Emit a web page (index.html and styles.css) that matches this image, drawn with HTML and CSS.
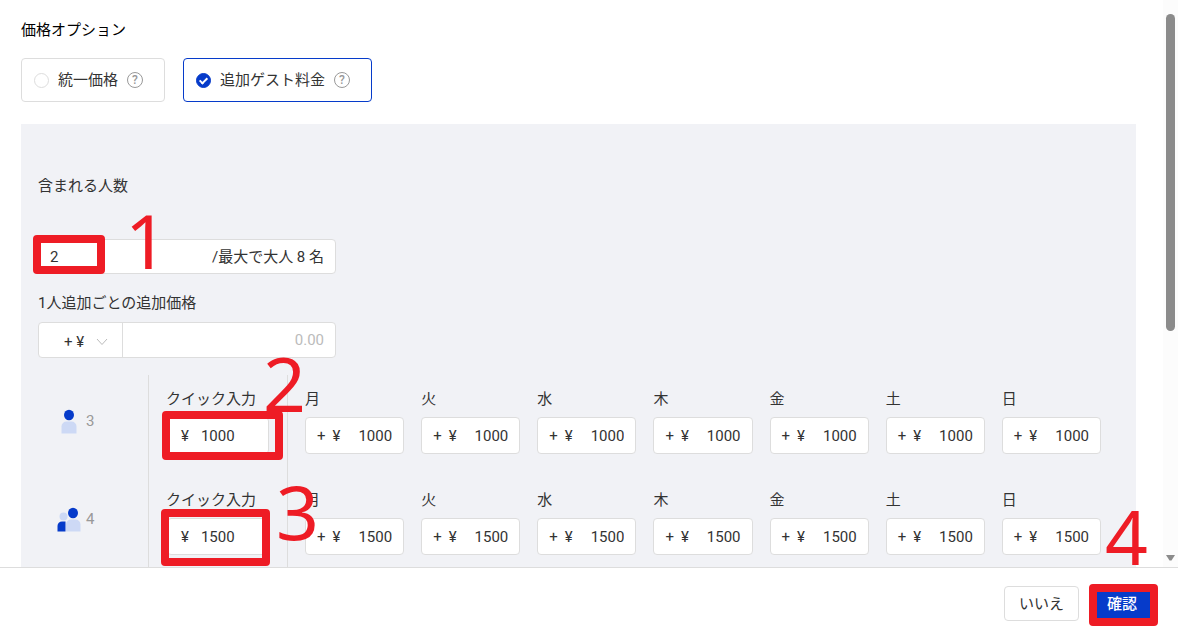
FILE: index.html
```html
<!DOCTYPE html>
<html lang="ja">
<head>
  <meta charset="UTF-8">
  <meta name="viewport" content="width=device-width, initial-scale=1.0">
  <title>価格オプション</title>
  <link rel="stylesheet" href="styles.css">
</head>
<body>
  <form class="dialog" id="priceForm">
    <div class="dialog-body">
      <div class="content">
        <h1>価格オプション</h1>
        <div class="options">
          <label class="option">
            <input type="radio" name="priceType" value="flat">
            <span>統一価格</span>
            <span class="help">?</span>
          </label>
          <label class="option selected">
            <input type="radio" name="priceType" value="extra" checked>
            <span>追加ゲスト料金</span>
            <span class="help">?</span>
          </label>
        </div>

        <div class="panel">
          <label class="field-label" for="included">含まれる人数</label>
          <div class="field included">
            <input type="text" id="included" value="2">
            <span class="suffix">/最大で大人 8 名</span>
            <span class="mark mark-1"></span>
            <span class="number number-1">1</span>
          </div>

          <label class="field-label" for="extraPrice">1人追加ごとの追加価格</label>
          <div class="field extra">
            <div class="select-box">
              <select id="extraType" aria-label="通貨">
                <option>+ ¥</option>
                <option>+ %</option>
              </select>
              <svg class="chevron" width="12" height="8" viewBox="0 0 12 8" fill="none" stroke="#bbb"><path d="M1 1l5 5.500L11 1"/></svg>
            </div>
            <input type="text" id="extraPrice" placeholder="0.00">
          </div>

          <div class="guest-row">
            <div class="guests">
              <svg width="24" height="25" viewBox="0 0 24 25">
                <path d="M4.500 24.500v-7a5 5 0 0 1 5-5h5a5 5 0 0 1 5 5v7z" fill="#cdd9f5"/>
                <ellipse cx="12" cy="6" rx="5" ry="5.300" fill="#063bca"/>
              </svg>
              <span>3</span>
            </div>
            <div class="quick">
              <label for="quick3">クイック入力</label>
              <div class="field">
                <span>¥</span><input type="text" id="quick3" value="1000">
                <span class="mark mark-2"></span>
                <span class="number number-2">2</span>
              </div>
            </div>
            <div class="days">
              <div class="day"><label for="mon3">月</label><div class="field"><span>+</span><span>¥</span><input type="text" id="mon3" value="1000"></div></div>
              <div class="day"><label for="tue3">火</label><div class="field"><span>+</span><span>¥</span><input type="text" id="tue3" value="1000"></div></div>
              <div class="day"><label for="wed3">水</label><div class="field"><span>+</span><span>¥</span><input type="text" id="wed3" value="1000"></div></div>
              <div class="day"><label for="thu3">木</label><div class="field"><span>+</span><span>¥</span><input type="text" id="thu3" value="1000"></div></div>
              <div class="day"><label for="fri3">金</label><div class="field"><span>+</span><span>¥</span><input type="text" id="fri3" value="1000"></div></div>
              <div class="day"><label for="sat3">土</label><div class="field"><span>+</span><span>¥</span><input type="text" id="sat3" value="1000"></div></div>
              <div class="day"><label for="sun3">日</label><div class="field"><span>+</span><span>¥</span><input type="text" id="sun3" value="1000"></div></div>
            </div>
          </div>

          <div class="guest-row">
            <div class="guests">
              <svg width="24" height="25" viewBox="0 0 24 25">
                <circle cx="6.500" cy="9.500" r="4" fill="#cdd9f5"/>
                <path d="M.5 24.500v-5.500a4.500 4.500 0 0 1 4.500-4.500h3.500v10z" fill="#063bca"/>
                <path d="M9 24.500v-7a5 5 0 0 1 5-5h4.500a5 5 0 0 1 5 5v7z" fill="#cdd9f5"/>
                <ellipse cx="16" cy="6" rx="5" ry="5.300" fill="#063bca"/>
              </svg>
              <span>4</span>
            </div>
            <div class="quick">
              <label for="quick4">クイック入力</label>
              <div class="field">
                <span>¥</span><input type="text" id="quick4" value="1500">
                <span class="mark mark-3"></span>
                <span class="number number-3">3</span>
              </div>
            </div>
            <div class="days">
              <div class="day"><label for="mon4">月</label><div class="field"><span>+</span><span>¥</span><input type="text" id="mon4" value="1500"></div></div>
              <div class="day"><label for="tue4">火</label><div class="field"><span>+</span><span>¥</span><input type="text" id="tue4" value="1500"></div></div>
              <div class="day"><label for="wed4">水</label><div class="field"><span>+</span><span>¥</span><input type="text" id="wed4" value="1500"></div></div>
              <div class="day"><label for="thu4">木</label><div class="field"><span>+</span><span>¥</span><input type="text" id="thu4" value="1500"></div></div>
              <div class="day"><label for="fri4">金</label><div class="field"><span>+</span><span>¥</span><input type="text" id="fri4" value="1500"></div></div>
              <div class="day"><label for="sat4">土</label><div class="field"><span>+</span><span>¥</span><input type="text" id="sat4" value="1500"></div></div>
              <div class="day"><label for="sun4">日</label><div class="field"><span>+</span><span>¥</span><input type="text" id="sun4" value="1500"></div></div>
            </div>
          </div>
        </div>
      </div>
      <div class="scrollbar">
        <div class="thumb"></div>
        <svg width="9" height="6" viewBox="0 0 9 6"><path d="M0 0h9L5.500 5.500h-2z" fill="#8b8b8b"/></svg>
      </div>
    </div>

    <div class="footer">
      <button type="button" class="cancel-btn">いいえ</button>
      <div class="confirm">
        <button type="submit" class="confirm-btn">確認</button>
        <span class="mark mark-4"></span>
        <span class="number number-4">4</span>
      </div>
    </div>
  </form>
</body>
</html>
```
FILE: styles.css
```css
* {
  box-sizing: border-box;
}
body {
  margin: 0;
  background: #fff;
  color: #333;
  font-family: Roboto, "Noto Sans CJK JP", sans-serif;
  font-size: 15px;
  line-height: 22px;
}
input, select, button {
  font: inherit;
  color: inherit;
}
.dialog {
  display: flex;
  flex-direction: column;
  height: 100vh;
}
.dialog-body {
  display: flex;
  flex: 1;
  min-height: 0;
}
.content {
  flex: 1;
  min-width: 0;
  overflow: hidden;
  padding: 19px 27px 0 21px;
}
h1 {
  margin: 0 0 17px;
  color: #000;
  font-size: 15px;
  font-weight: 400;
}

/* price type */
.options {
  display: flex;
  gap: 18px;
  margin-bottom: 22px;
}
.option {
  display: flex;
  align-items: center;
  gap: 9px;
  height: 44px;
  padding: 0 21px 0 12px;
  border: 1px solid #ddd;
  border-radius: 4px;
}
.option.selected {
  border-color: #063bca;
}
.option input {
  appearance: none;
  display: flex;
  justify-content: center;
  width: 15px;
  height: 15px;
  margin: 0;
  border: 1px solid #ddd;
  border-radius: 50%;
}
.option input:checked {
  border-color: #063bca;
  background: #063bca;
}
.option input:checked::after {
  content: "";
  width: 3px;
  height: 6px;
  margin-top: 2px;
  border: solid #fff;
  border-width: 0 2px 2px 0;
  transform: rotate(45deg);
}
.help {
  width: 16px;
  height: 16px;
  border: 1px solid #999;
  border-radius: 50%;
  color: #999;
  font-size: 12px;
  font-weight: 500;
  line-height: 14px;
  text-align: center;
}

/* extra guest panel */
.panel {
  padding: 51px 35px 20px 17px;
  background: #f1f2f6;
}
.field-label {
  display: block;
}
.field {
  position: relative;
  display: flex;
  align-items: center;
  height: 37px;
  border: 1px solid #ddd;
  border-radius: 4px;
  background: #fff;
}
.field input {
  flex: 1;
  width: 0;
  min-width: 0;
  padding: 0;
  border: none;
  outline: none;
  background: none;
}
.included, .extra {
  width: 298px;
}
.included {
  height: 35px;
  margin: 42px 0 18px;
  padding: 0 11px;
}
.extra {
  height: 36px;
  margin: 8px 0 17px;
}
.extra input {
  padding-right: 11px;
  text-align: right;
}
.extra input::placeholder {
  color: #bbb;
}
.select-box {
  display: flex;
  align-items: center;
  align-self: stretch;
  padding: 3px 14px 0 25px;
  border-right: 1px solid #ddd;
}
.select-box select {
  appearance: none;
  width: 32px;
  padding: 0;
  border: none;
  background: none;
}

/* one row per number of guests */
.guest-row {
  display: grid;
  grid-template-columns: 110px 140px 1fr;
}
.guests, .quick, .days {
  padding: 13px 0 4px;
}
.guest-row + .guest-row > div {
  padding-top: 31px;
  padding-bottom: 16px;
}
.guest-row + .guest-row > .guests {
  padding-bottom: 22px;
}
.guests {
  display: flex;
  align-items: center;
  padding-left: 19px;
  gap: 5px;
  color: #999;
}
.quick {
  border: solid #ddd;
  border-width: 0 1px;
}
.quick label {
  display: block;
  margin: 0 0 7px 17px;
}
.quick .field {
  margin: 0 18px;
  padding-left: 13px;
  gap: 12px;
}
.days {
  display: grid;
  grid-template-columns: repeat(7, 1fr);
  gap: 17px;
  padding-left: 17px;
}
.day label {
  display: block;
  margin-bottom: 7px;
}
.day .field {
  padding: 0 11px;
  gap: 7px;
}
.day .field input {
  text-align: right;
}

/* scrollbar */
.scrollbar {
  display: flex;
  flex-direction: column;
  align-items: center;
  justify-content: space-between;
  width: 15px;
  padding: 14px 0 6px;
  background: #fcfcfc;
}
.thumb {
  width: 9px;
  height: 58%;
  border-radius: 5px;
  background: #8b8b8b;
}

.footer {
  display: flex;
  justify-content: flex-end;
  gap: 13px;
  padding: 18px 26px 12px;
  border-top: 1px solid #ddd;
}
.footer button {
  height: 35px;
  padding: 0 14px;
  border: 1px solid #ddd;
  border-radius: 4px;
  background: #fff;
  line-height: 30px;
  cursor: pointer;
}
.footer .confirm-btn {
  border-color: #063bca;
  background: #063bca;
  color: #fff;
  font-weight: 500;
}
.confirm {
  position: relative;
}

/* step markers over the controls */
.mark {
  position: absolute;
  border: 8px solid #ee1c25;
  border-radius: 4px;
  pointer-events: none;
}
.number {
  position: absolute;
  z-index: 1;
  color: #ee1c25;
  font-family: "Noto Sans", sans-serif;
  font-size: 75px;
  line-height: 76px;
  pointer-events: none;
}
.mark-1 {
  left: -6px;
  top: -5px;
  width: 72px;
  height: 39px;
}
.number-1 {
  left: 86px;
  top: -38px;
}
.mark-2 {
  left: -6px;
  top: -7px;
  width: 121px;
  height: 49px;
}
.number-2 {
  left: 95px;
  top: -73px;
}
.mark-3 {
  left: -7px;
  top: -10px;
  width: 109px;
  height: 57px;
}
.number-3 {
  left: 108px;
  top: -46px;
}
.mark-4 {
  left: -3px;
  top: -2px;
  width: 69px;
  height: 42px;
}
.number-4 {
  left: 13px;
  top: -88px;
}
```
